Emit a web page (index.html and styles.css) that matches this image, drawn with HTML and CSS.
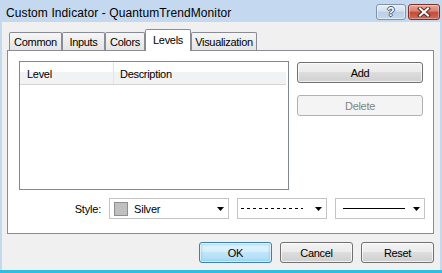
FILE: index.html
```html
<!DOCTYPE html>
<html lang="en">
<head>
    <meta charset="UTF-8">
    <title>Custom Indicator - QuantumTrendMonitor</title>
    <link rel="stylesheet" href="styles.css">
</head>
<body>
    <div class="window">
        <div class="titlebar">
            <span class="title">Custom Indicator - QuantumTrendMonitor</span>
            <div class="caption-buttons">
                <div class="cap cap-help">?</div>
                <div class="cap cap-close">
                    <svg width="14" height="10" viewBox="0 0 14 10">
                        <path d="M3 1.5 L11 8.5 M11 1.5 L3 8.5" stroke="#5a2a22" stroke-width="4" stroke-linecap="square"/>
                        <path d="M3 1.5 L11 8.5 M11 1.5 L3 8.5" stroke="#ffffff" stroke-width="2" stroke-linecap="square"/>
                    </svg>
                </div>
            </div>
        </div>
        <div class="client">
            <div class="tabs">
                <div class="tab tab-common">Common</div>
                <div class="tab tab-inputs">Inputs</div>
                <div class="tab tab-colors">Colors</div>
                <div class="tab tab-levels active">Levels</div>
                <div class="tab tab-visual">Visualization</div>
            </div>
            <div class="panel">
                <div class="panel-top">
                    <div class="list">
                        <div class="list-header">
                            <div class="col col-level">Level</div>
                            <div class="col col-desc">Description</div>
                        </div>
                    </div>
                    <div class="side">
                        <button class="btn">Add</button>
                        <button class="btn" disabled>Delete</button>
                    </div>
                </div>
                <div class="style-row">
                    <span class="label">Style:</span>
                    <div class="combo combo-color">
                        <span class="swatch"></span>
                        <span class="combo-text">Silver</span>
                        <svg class="arrow" width="7" height="4" viewBox="0 0 7 4"><polygon points="0,0 7,0 3.5,4" fill="#000"/></svg>
                    </div>
                    <div class="combo combo-line">
                        <span class="line line-dash"></span>
                        <svg class="arrow" width="7" height="4" viewBox="0 0 7 4"><polygon points="0,0 7,0 3.5,4" fill="#000"/></svg>
                    </div>
                    <div class="combo combo-line">
                        <span class="line line-solid"></span>
                        <svg class="arrow" width="7" height="4" viewBox="0 0 7 4"><polygon points="0,0 7,0 3.5,4" fill="#000"/></svg>
                    </div>
                </div>
            </div>
            <div class="dialog-buttons">
                <button class="btn btn-default">OK</button>
                <button class="btn">Cancel</button>
                <button class="btn">Reset</button>
            </div>
        </div>
    </div>
</body>
</html>
```

FILE: styles.css
```css
body {
    margin: 0;
    font-family: "Liberation Sans", Arial, sans-serif;
    font-size: 11px;
    color: #000;
}
.window {
    width: 442px;
    height: 273px;
    box-sizing: border-box;
    background-color: #c4d9f0;
    border-bottom: 3px solid #2dbfe2;
    display: flex;
    flex-direction: column;
}
.titlebar {
    height: 22px;
    display: flex;
    align-items: flex-start;
    justify-content: space-between;
    padding: 0 2px 0 6px;
}
.title {
    font-size: 12px;
    line-height: 18px;
    padding-top: 4px;
    letter-spacing: 0.1px;
}
.caption-buttons {
    display: flex;
    gap: 2px;
    margin-top: 4px;
}
.cap {
    height: 16px;
    box-sizing: border-box;
    border-radius: 3px;
    display: flex;
    align-items: center;
    justify-content: center;
}
.cap-help {
    width: 30px;
    border: 1px solid #7f93ad;
    background: linear-gradient(#e6eef7 0%, #d3e0ef 45%, #bccfe5 50%, #c6d8ec 100%);
    box-shadow: inset 0 0 0 1px rgba(255, 255, 255, 0.5);
    color: #fff;
    font-weight: bold;
    font-size: 12px;
    text-shadow: 1px 0 #46586e, -1px 0 #46586e, 0 1px #46586e, 0 -1px #46586e;
}
.cap-close {
    width: 32px;
    border: 1px solid #7b3026;
    background: linear-gradient(#e8a89c 0%, #d7806f 45%, #c4493a 50%, #cf6a58 100%);
    box-shadow: inset 0 0 0 1px rgba(255, 255, 255, 0.35);
}
.client {
    flex: 1;
    margin: 0 2px;
    background-color: #f0f0f0;
    padding: 7px 6px 0 5px;
}
.tabs {
    display: flex;
    align-items: flex-end;
    height: 21px;
    padding-left: 2px;
}
.tab {
    height: 18px;
    box-sizing: border-box;
    border: 1px solid #898c95;
    border-bottom: none;
    border-radius: 2px 2px 0 0;
    background: linear-gradient(#f6f6f6, #e4e4e4);
    text-align: center;
    line-height: 17px;
    padding-top: 1px;
    letter-spacing: -0.3px;
}
.tab-common { width: 53px; }
.tab-inputs { width: 43px; }
.tab-colors { width: 40px; }
.tab-levels { width: 46px; }
.tab-visual { width: 66px; }
.tab.active {
    height: 22px;
    margin-bottom: -1px;
    padding-top: 2px;
    background: #fff;
    position: relative;
    z-index: 1;
}
.panel {
    height: 184px;
    box-sizing: border-box;
    border: 1px solid #898c95;
    background-color: #fff;
    padding: 10px 8px 0 11px;
    display: flex;
    flex-direction: column;
}
.panel-top {
    display: flex;
    gap: 8px;
}
.list {
    width: 270px;
    height: 129px;
    box-sizing: border-box;
    border: 1px solid #828790;
    background-color: #fff;
}
.list-header {
    display: flex;
    height: 23px;
    box-sizing: border-box;
    border-bottom: 1px solid #d5d5d5;
    background: linear-gradient(#ffffff 0%, #ffffff 45%, #f1f2f4 45%, #f1f2f4 100%);
    margin-right: 2px;
}
.col {
    line-height: 22px;
    padding-top: 1px;
    letter-spacing: -0.3px;
}
.col-level {
    width: 94px;
    box-sizing: border-box;
    padding-left: 7px;
    border-right: 1px solid #e3e5e8;
}
.col-desc {
    padding-left: 6px;
}
.side {
    width: 126px;
    display: flex;
    flex-direction: column;
    gap: 12px;
    padding-top: 1px;
}
.btn {
    height: 21px;
    box-sizing: border-box;
    border: 1px solid #707070;
    border-radius: 3px;
    background: linear-gradient(#f2f2f2 0%, #ebebeb 50%, #dddddd 50%, #cfcfcf 100%);
    box-shadow: inset 0 0 0 1px rgba(255, 255, 255, 0.7);
    font-family: "Liberation Sans", Arial, sans-serif;
    font-size: 11px;
    letter-spacing: -0.3px;
    color: #000;
    padding: 0;
}
.btn:disabled {
    border-color: #adb2b5;
    background: #f4f4f4;
    box-shadow: none;
    color: #838383;
}
.btn-default {
    border-color: #3c7fb1;
    background: linear-gradient(#e5f4fc 0%, #d4eefb 50%, #bfe6fa 50%, #acdcf6 100%);
    box-shadow: inset 0 0 0 1px rgba(255, 255, 255, 0.6), inset 0 0 2px 2px rgba(120, 200, 240, 0.5);
}
.style-row {
    display: flex;
    align-items: center;
    justify-content: flex-end;
    gap: 8px;
    margin-top: 8px;
    height: 21px;
}
.label {
    letter-spacing: -0.2px;
}
.combo {
    height: 21px;
    box-sizing: border-box;
    border: 1px solid #c4c4c4;
    background-color: #fff;
    display: flex;
    align-items: center;
    padding-right: 4px;
}
.combo-color {
    width: 120px;
    padding-left: 4px;
}
.combo-line {
    width: 90px;
    padding-left: 3px;
}
.swatch {
    width: 14px;
    height: 14px;
    box-sizing: border-box;
    border: 1px solid #8e8e8e;
    background-color: #c0c0c0;
}
.combo-text {
    margin-left: 6px;
    letter-spacing: -0.2px;
}
.arrow {
    margin-left: auto;
}
.line {
    height: 1px;
    width: 62px;
}
.line-dash {
    background: repeating-linear-gradient(to right, #000 0 3px, transparent 3px 6px);
}
.line-solid {
    margin-left: 4px;
    background-color: #000;
}
.dialog-buttons {
    display: flex;
    justify-content: flex-end;
    gap: 8px;
    margin-top: 8px;
}
.dialog-buttons .btn {
    width: 73px;
}
```
